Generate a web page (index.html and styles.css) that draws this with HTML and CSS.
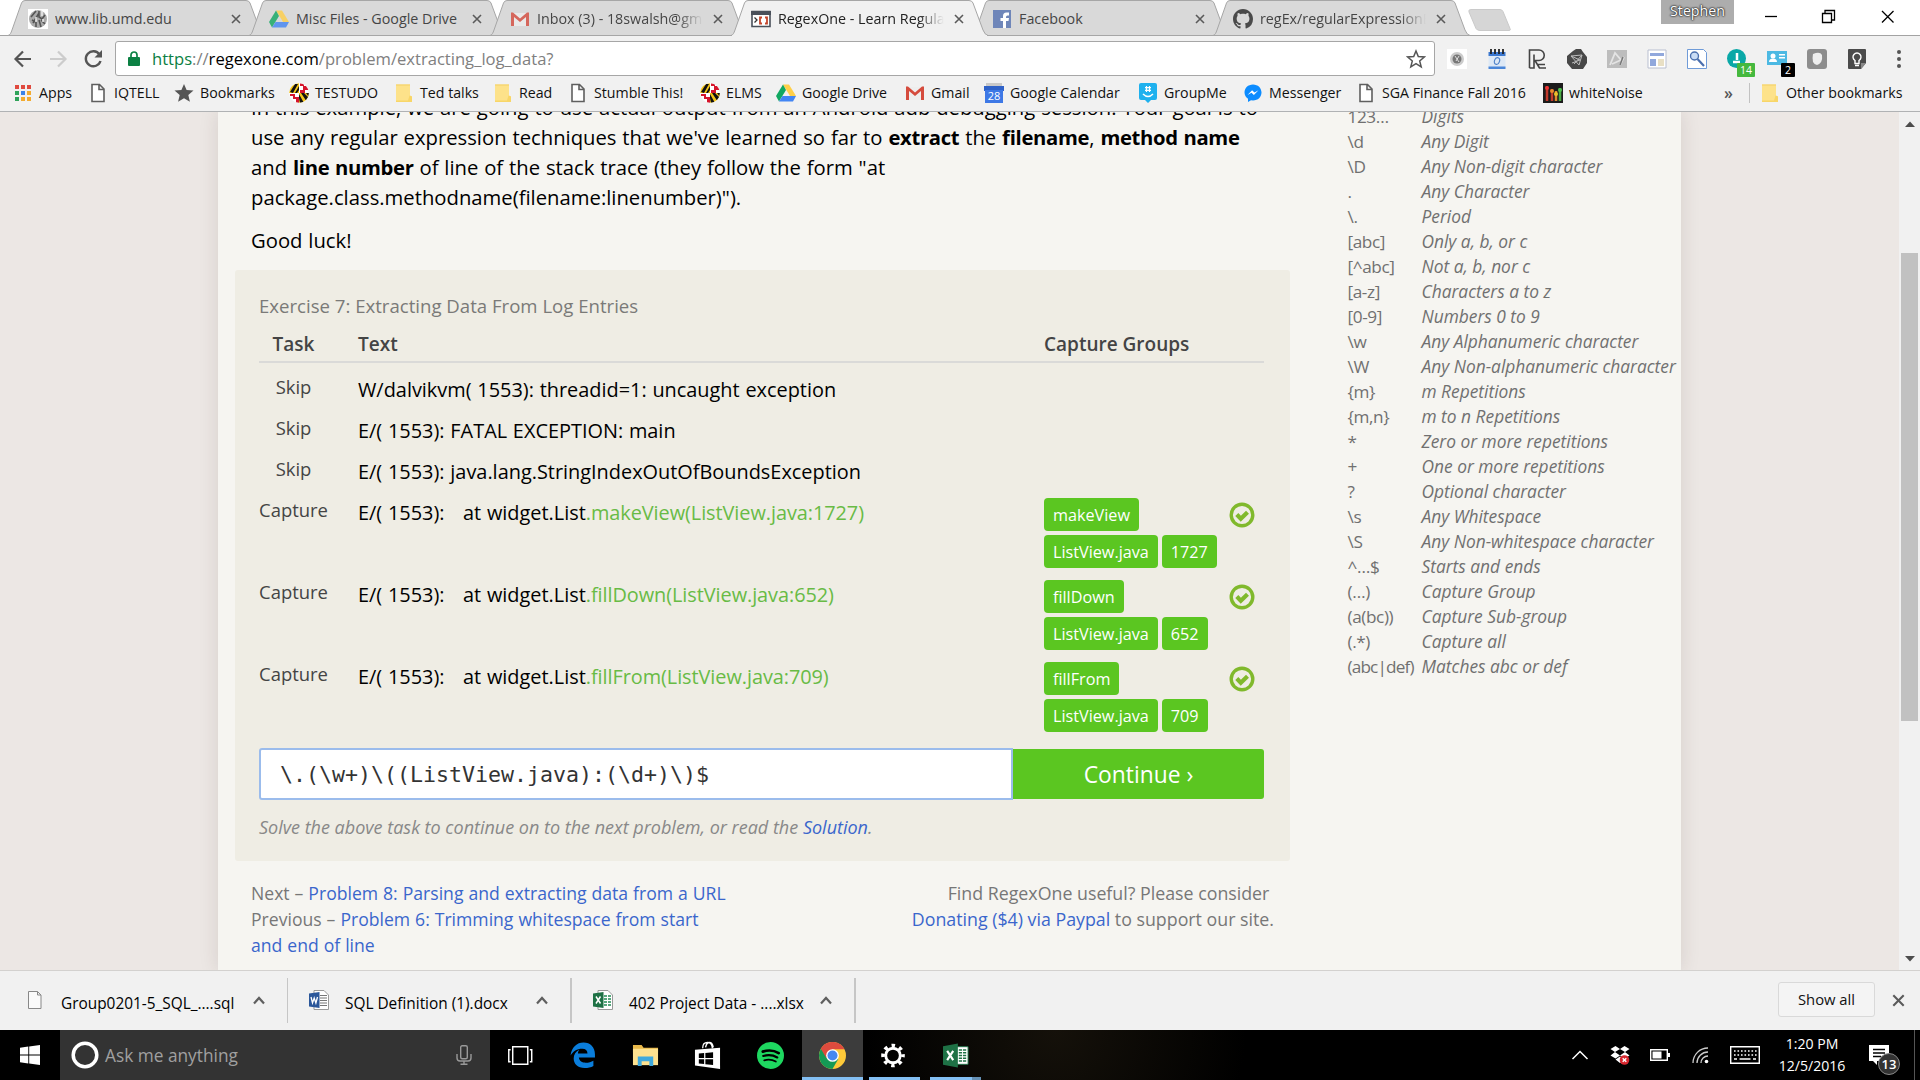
FILE: index.html
```html
<!DOCTYPE html>
<html lang="en">
<head>
<meta charset="utf-8">
<title>RegexOne - Learn Regular Expressions</title>
<link rel="stylesheet" href="styles.css">
</head>
<body>
<svg class="defs" width="0" height="0">
  <symbol id="tab-shape" viewBox="0 0 257 36"><path d="M0 35.5C2 35 3 33 4 30L13.500 3Q14.500 .5 17 .5H238Q241 .5 242 3L252 30Q254 35 257 35.500Z"/></symbol>
  <symbol id="close" viewBox="0 0 10 10"><path d="M1 1l8 8M9 1L1 9" fill="none" stroke="#5a5a5a" stroke-width="1.600"/></symbol>
  <symbol id="doc" viewBox="0 0 20 20"><path d="M4 1.500h7.500l4.500 4.500v12.500H4zM11 2v4.500h4.500" fill="#fff" stroke="#5f5f5f" stroke-width="1.600"/></symbol>
  <symbol id="folder" viewBox="0 0 20 20"><path d="M2 1.500h14v11l2 1v5H2z" fill="#fde28a"/><path d="M2 1.500h14v1H2z" fill="#f3d066"/><path d="M2 17.500h12l1.500-5 2.500 1v5.500H2z" fill="#f8d668"/></symbol>
  <symbol id="umd" viewBox="0 0 20 20"><clipPath id="ball"><circle cx="10" cy="10" r="9.800"/></clipPath><g clip-path="url(#ball)"><path fill="#fff" d="M0 0h20v20H0z"/><path fill="#f5c518" d="M0 0h10v10H0zM10 10h10v10H10z"/><path d="M1 9l5-8h3L4 10zM6 10l4-7v4l-2 3zM0 5l4-4H1zM10 11l5 9h-4l-1-5zM12 10l6 9 2-4-5-5zM17 10h3v4z" fill="#111"/><path d="M11 0h4v3h5v4h-4v3h-5V7h3V3h-3zM1 11h5v3h4v6H7v-4H4v-3H1z" fill="#d5142b"/></g></symbol>
  <symbol id="drive" viewBox="0 0 20 20"><path d="M7 1.500h6l7 11.500h-6z" fill="#ffcf48"/><path d="M7 1.500L0 13l3 5.500L10 7z" fill="#11a861"/><path d="M6.500 13H20l-3 5.500H3z" fill="#4285f4"/></symbol>
  <symbol id="gmail" viewBox="0 0 20 20"><path d="M2 4h16v13H2z" fill="#eee"/><path d="M1 17V3.500h2l7 6 7-6h2V17h-3V8l-6 5-6-5v9z" fill="#d54b3d"/></symbol>
  <symbol id="chev" viewBox="0 0 14 9"><path d="M2 7.500l5-5.500 5 5.500" fill="none" stroke="#5f5f5f" stroke-width="2.200"/></symbol>
  <symbol id="check" viewBox="0 0 26 26"><circle cx="13" cy="13" r="10.800" fill="none" stroke="#80b92c" stroke-width="3.400"/><path d="M7.800 12.500l4 4.200 6.700-6.500" fill="none" stroke="#80b92c" stroke-width="4.200"/></symbol>
</svg>

<header class="chrome">
  <div class="tabstrip">
    <div class="tab"><svg class="shape"><use href="#tab-shape"/></svg>
      <svg class="fav" viewBox="0 0 20 20"><path fill="#fff" d="M0 0h20v20H0z"/><circle cx="10" cy="10" r="9" fill="#aaa"/><path d="M3 8l5-6M5 14l6-10M4 11l4 2v5M11 2v6l3 2 3-4M11 11l2 7M13 11l4 4" stroke="#555" stroke-width="1.600" fill="none"/><path d="M14 2v5M8 8v5M15 10v3" stroke="#eee" stroke-width="1.500"/></svg>
      <span class="tab-title">www.lib.umd.edu</span><svg class="x"><use href="#close"/></svg></div>
    <div class="tab"><svg class="shape"><use href="#tab-shape"/></svg><svg class="fav dim"><use href="#drive"/></svg><span class="tab-title">Misc Files - Google Drive</span><svg class="x"><use href="#close"/></svg></div>
    <div class="tab"><svg class="shape"><use href="#tab-shape"/></svg><svg class="fav dim"><use href="#gmail"/></svg><span class="tab-title fade">Inbox (3) - 18swalsh@gm</span><svg class="x"><use href="#close"/></svg></div>
    <div class="tab active"><svg class="shape"><use href="#tab-shape"/></svg>
      <svg class="fav" viewBox="0 0 20 20"><path d="M1 2.500h18v15H1z" fill="#fff" stroke="#4a505a" stroke-width="1.600"/><path d="M0 2h20v4H0z" fill="#4a505a"/><path d="M3.500 8.500l2.500 2.500-2.500 2.500" fill="none" stroke="#333" stroke-width="1.300"/><path d="M11 8.500H9v6h2M14 8.500h2v6h-2" fill="none" stroke="#c5462c" stroke-width="1.800"/></svg>
      <span class="tab-title fade">RegexOne - Learn Regula</span><svg class="x"><use href="#close"/></svg></div>
    <div class="tab"><svg class="shape"><use href="#tab-shape"/></svg>
      <svg class="fav" viewBox="0 0 20 20"><path fill="#6f86b9" d="M1 1h18v18H1z"/><path d="M11 19v-7H8.500V9H11V7q0-3.500 3.500-3.500H17v3h-1.500q-1.500 0-1.500 1.500V9h3l-.5 3H14v7z" fill="#fff"/></svg>
      <span class="tab-title">Facebook</span><svg class="x"><use href="#close"/></svg></div>
    <div class="tab"><svg class="shape"><use href="#tab-shape"/></svg>
      <svg class="fav" viewBox="0 0 16 16"><path fill="#4a4a4a" d="M8 0C3.580 0 0 3.580 0 8c0 3.540 2.290 6.530 5.470 7.590.4.070.55-.17.55-.38v-1.490c-2.010.37-2.530-.49-2.690-.94-.09-.23-.48-.94-.82-1.130-.28-.15-.68-.52-.01-.53.63-.01 1.080.58 1.230.82.72 1.210 1.870.87 2.330.66.07-.52.28-.87.51-1.070-1.780-.2-3.640-.89-3.640-3.950 0-.87.31-1.590.82-2.150-.08-.2-.36-1.020.08-2.120 0 0 .67-.21 2.200.82.64-.18 1.320-.27 2-.27s1.360.09 2 .27c1.530-1.040 2.200-.82 2.200-.82.44 1.100.16 1.920.08 2.120.51.560.82 1.270.82 2.150 0 3.070-1.870 3.750-3.650 3.950.29.25.54.73.54 1.480v2.200c0 .21.15.46.55.38A8.010 8.010 0 0 0 16 8c0-4.420-3.580-8-8-8z"/></svg>
      <span class="tab-title fade">regEx/regularExpressionE</span><svg class="x"><use href="#close"/></svg></div>
    <svg class="newtab" viewBox="0 0 44 22"><path d="M3 .5h29q2 0 3 2l7 17q1 2-1 2H12q-3 0-4-2L1 3Q0 .5 3 .5z" fill="#d6d6d6" stroke="#cacaca"/></svg>
    <div class="profile">Stephen</div>
    <svg class="winctl" viewBox="0 0 140 35"><g fill="none" stroke="#000" stroke-width="1.300"><path d="M5 16.500h12"/><path d="M62.500 13.500h9v9h-9zM65 13v-2.500h9.500v9.500H72"/><path d="M122 11l11.500 11.500M133.500 11L122 22.500"/></g></svg>
  </div>

  <div class="toolbar">
    <svg class="nav" viewBox="0 0 115 36"><g fill="none" stroke-width="2.200"><path d="M31 18H16M23 10.500L15.500 18l7.500 7.500" stroke="#555"/><path d="M50 18h15M58 10.500l7.500 7.500-7.500 7.500" stroke="#ccc"/><path d="M99.500 13.500A7.500 7.500 0 1 0 100.500 20" stroke="#555" stroke-width="2.400"/></g><path d="M102 9v7.500h-7.500z" fill="#555"/></svg>
    <div class="omnibox">
      <svg class="lock" viewBox="0 0 12 15"><path d="M1 6h10q1 0 1 1v7q0 1-1 1H1q-1 0-1-1V7q0-1 1-1z" fill="#0b8043"/><path d="M3 6.500V4a3 3 0 0 1 6 0v2.500" fill="none" stroke="#0b8043" stroke-width="1.700"/></svg>
      <span class="url"><span class="secure">https</span>://<span class="host">regexone.com</span>/problem/extracting_log_data?</span>
      <svg class="star" viewBox="0 0 20 20"><path d="M10 2l2.300 5.600 6 .4-4.600 3.900 1.500 5.900L10 14.600l-5.200 3.200 1.500-5.900L1.700 8l6-.4z" fill="none" stroke="#555" stroke-width="1.500"/></svg>
    </div>
    <div class="exts">
      <svg viewBox="0 0 20 20"><path fill="#fff" d="M0 0h20v20H0z"/><circle cx="10" cy="10" r="7" fill="#ccc"/><circle cx="10" cy="10" r="4.500" fill="#777"/><path d="M8 7l4 6M12 7l-3 5" stroke="#ddd"/></svg>
      <svg viewBox="0 0 20 20"><path fill="#3c78cf" d="M1.500 3h17v4h-17z"/><path fill="#dde8f5" d="M1.500 7h17v12h-17z"/><path fill="#4a86d8" d="M1.500 17.500h17V20h-17z"/><path d="M4 0v5M8 0v5M12 0v5M16 0v5" stroke="#222" stroke-width="1.800"/><ellipse cx="10" cy="12" rx="2.500" ry="3.500" fill="none" stroke="#4f82c9" stroke-width="1.200" transform="rotate(20 10 12)"/></svg>
      <svg viewBox="0 0 20 20"><path d="M2.500 19V1h9.500a5 5 0 0 1 0 10.500H7V5.500M8 11.500L12.500 19M2.500 19H7V8M11 15.500h7M12 19h7" fill="none" stroke="#444" stroke-width="1.600"/></svg>
      <svg viewBox="0 0 20 20"><path d="M6 2l3-2h5l2 3 4 5v6l-4 6H5l-5-6V7z" fill="#484848"/><path d="M4 7l11-1-3 10-8-9 9 4-8 3M15 6l-8 9" stroke="#bbb" fill="none"/></svg>
      <svg viewBox="0 0 20 20"><path fill="#bdbdbd" d="M0 1h20v18H0z"/><path d="M3 16L8 4l6 7-9 4M13 16l4-8" fill="none" stroke="#e4e4e4" stroke-width="1.800"/><path d="M13 16l3-8" stroke="#777" stroke-width="1.500"/></svg>
      <svg viewBox="0 0 20 20"><path d="M1 1h18v18H1z" fill="#fff" stroke="#b9bfd0"/><path fill="#91a8dc" d="M3 4h14v3H3zM3 10h6v7H3z"/><path fill="#e8dfc4" d="M11 10h6v7h-6z"/></svg>
      <svg viewBox="0 0 20 20"><path d="M.5.500h16l3 3v16H.5z" fill="#fff" stroke="#6f9bd8"/><circle cx="7.500" cy="7" r="4" fill="#c9dcf5" stroke="#4a6fae" stroke-width="1.400"/><path d="M10.500 10l6.500 7" stroke="#4a6fae" stroke-width="2.200"/></svg>
      <svg viewBox="0 0 20 20"><circle cx="9.500" cy="9.500" r="9.500" fill="#0aa8a7"/><path d="M10 4v7M6 13h7" stroke="#fff" stroke-width="2.500"/></svg>
      <svg viewBox="0 0 20 20"><path fill="#4cb9e3" d="M0 2h20v14H0z"/><circle cx="6" cy="7" r="2.500" fill="#fff"/><path fill="#fff" d="M2 13q0-3.500 4-3.500t4 3.500zM12 5h6v1.500h-6zM12 8h6v1.500h-6z"/></svg>
      <svg viewBox="0 0 20 20"><rect width="20" height="20" rx="3" fill="#8d8d8d"/><path d="M6 5q7-3 9 1 1 8-5 10-6-1-4-11z" fill="#eee"/></svg>
      <svg viewBox="0 0 20 20"><path d="M2 0h16q1 0 1 1v13l-5 6H2q-1 0-1-1V1q0-1 1-1z" fill="#4b4b4b"/><path d="M14 20v-6h5z" fill="#888"/><path d="M8 14.500v-3a4 4 0 1 1 4 0v3zM8 16.500h4" fill="none" stroke="#fff" stroke-width="1.400"/></svg>
    </div>
    <svg class="dots" viewBox="0 0 6 20"><circle cx="3" cy="3" r="2"/><circle cx="3" cy="10" r="2"/><circle cx="3" cy="17" r="2"/></svg>
    <span class="badge green">14</span><span class="badge dark">2</span>
  </div>

  <nav class="bookmarks">
    <a><svg viewBox="0 0 20 20"><path fill="#e04a3f" d="M2 2h4v4H2zM8 2h4v4H8zM14 2h4v4h-4z"/><path fill="#2fa35a" d="M2 8h4v4H2zM2 14h4v4H2z"/><path fill="#3b83e8" d="M8 8h4v4H8z"/><path fill="#f3ab2f" d="M14 8h4v4h-4zM8 14h4v4H8zM14 14h4v4h-4z"/></svg>Apps</a>
    <a><svg><use href="#doc"/></svg>IQTELL</a>
    <a><svg viewBox="0 0 20 20"><path d="M10 1l2.600 6 6.900.6-5.200 4.500 1.600 6.700-5.900-3.600-5.900 3.600 1.600-6.700L.5 7.600l6.900-.6z" fill="#555"/></svg>Bookmarks</a>
    <a><svg><use href="#umd"/></svg>TESTUDO</a>
    <a><svg><use href="#folder"/></svg>Ted talks</a>
    <a><svg><use href="#folder"/></svg>Read</a>
    <a><svg><use href="#doc"/></svg>Stumble This!</a>
    <a><svg><use href="#umd"/></svg>ELMS</a>
    <a><svg><use href="#drive"/></svg>Google Drive</a>
    <a><svg><use href="#gmail"/></svg>Gmail</a>
    <a><svg viewBox="0 0 20 20"><path fill="#c9c9c9" d="M2 0h16v4H2z"/><path fill="#2f62c8" d="M0 3h20v5H0z"/><path fill="#3d78e6" d="M1 7h18v13H1z"/><text x="10" y="16.500" class="cal">28</text></svg>Google Calendar</a>
    <a><svg viewBox="0 0 20 20"><path d="M3 0h14q2 0 2 2v13q0 2-2 2h-4l-3 3-3-3H3q-2 0-2-2V2q0-2 2-2z" fill="#1fb1ee"/><path d="M8.500 3v6M11.500 3v6M7 4.700h6M7 7.300h6" stroke="#fff" stroke-width="1.200"/><path d="M5 11q5 5 10 0" fill="none" stroke="#fff" stroke-width="1.500"/></svg>GroupMe</a>
    <a><svg viewBox="0 0 20 20"><path d="M10 1.500c5 0 8.500 3.600 8.500 8s-3.500 8-8.500 8l-2-.3L5 19v-3.200C2.800 14.300 1.500 12 1.500 9.500c0-4.400 3.500-8 8.500-8z" fill="#0c8cff"/><path d="M4.500 12l4.600-4.800 2.400 2.300 4-2.300-4.600 4.800-2.400-2.300z" fill="#fff"/></svg>Messenger</a>
    <a><svg><use href="#doc"/></svg>SGA Finance Fall 2016</a>
    <a><svg viewBox="0 0 20 20"><path fill="#1b1b1b" d="M0 0h20v20H0z"/><path d="M4 3v15M9 6v12" stroke="#c0392b" stroke-width="2.500"/><path d="M13 8v10" stroke="#e08a2e" stroke-width="2.500"/><path d="M17 5v13" stroke="#49a942" stroke-width="2.500"/><circle cx="4" cy="5" r="2" fill="#e33"/><circle cx="9" cy="8" r="2" fill="#e98a2b"/><circle cx="13" cy="11" r="2" fill="#e9c12b"/><circle cx="17" cy="7" r="2" fill="#4fc14f"/></svg>whiteNoise</a>
    <span class="more">»</span>
    <a class="other"><svg><use href="#folder"/></svg>Other bookmarks</a>
  </nav>
</header>

<main class="viewport">
  <div class="page">
    <section class="lesson">
      <p>In this example, we are going to use actual output from an Android adb debugging session. Your goal is to<br>use any regular expression techniques that we've learned so far to <b>extract</b> the <b>filename</b>, <b>method name</b><br>and <b>line number</b> of line of the stack trace (they follow the form "at<br>package.class.methodname(filename:linenumber)").</p>
      <p>Good luck!</p>
      <div class="exercise">
        <h2>Exercise 7: Extracting Data From Log Entries</h2>
        <div class="row head"><span class="task">Task</span><span>Text</span><span>Capture Groups</span></div>
        <div class="rows">
          <div class="row"><span class="task">Skip</span><span class="log">W/dalvikvm( 1553): threadid=1: uncaught exception</span></div>
          <div class="row"><span class="task">Skip</span><span class="log">E/( 1553): FATAL EXCEPTION: main</span></div>
          <div class="row"><span class="task">Skip</span><span class="log">E/( 1553): java.lang.StringIndexOutOfBoundsException</span></div>
          <div class="row cap"><span class="task">Capture</span><span class="log"><span class="pre">E/( 1553):</span>at widget.List<em>.makeView(ListView.java:1727)</em></span><span class="groups"><i>makeView</i><i>ListView.java</i><i>1727</i></span><svg class="ok"><use href="#check"/></svg></div>
          <div class="row cap"><span class="task">Capture</span><span class="log"><span class="pre">E/( 1553):</span>at widget.List<em>.fillDown(ListView.java:652)</em></span><span class="groups"><i>fillDown</i><i>ListView.java</i><i>652</i></span><svg class="ok"><use href="#check"/></svg></div>
          <div class="row cap"><span class="task">Capture</span><span class="log"><span class="pre">E/( 1553):</span>at widget.List<em>.fillFrom(ListView.java:709)</em></span><span class="groups"><i>fillFrom</i><i>ListView.java</i><i>709</i></span><svg class="ok"><use href="#check"/></svg></div>
        </div>
        <div class="answer"><div class="input">\.(\w+)\((ListView.java):(\d+)\)$</div><div class="continue">Continue ›</div></div>
        <p class="hint">Solve the above task to continue on to the next problem, or read the <a>Solution</a>.</p>
      </div>
      <div class="footer">
        <div class="links">Next – <a>Problem 8: Parsing and extracting data from a URL</a><br>Previous – <a>Problem 6: Trimming whitespace from start<br>and end of line</a></div>
        <div class="donate">Find RegexOne useful? Please consider&nbsp;<br><a>Donating ($4) via Paypal</a> to support our site.</div>
      </div>
    </section>
    <aside class="cheats">
      <code>123…</code><i>Digits</i>
      <code>\d</code><i>Any Digit</i>
      <code>\D</code><i>Any Non-digit character</i>
      <code>.</code><i>Any Character</i>
      <code>\.</code><i>Period</i>
      <code>[abc]</code><i>Only a, b, or c</i>
      <code>[^abc]</code><i>Not a, b, nor c</i>
      <code>[a-z]</code><i>Characters a to z</i>
      <code>[0-9]</code><i>Numbers 0 to 9</i>
      <code>\w</code><i>Any Alphanumeric character</i>
      <code>\W</code><i>Any Non-alphanumeric character</i>
      <code>{m}</code><i>m Repetitions</i>
      <code>{m,n}</code><i>m to n Repetitions</i>
      <code>*</code><i>Zero or more repetitions</i>
      <code>+</code><i>One or more repetitions</i>
      <code>?</code><i>Optional character</i>
      <code>\s</code><i>Any Whitespace</i>
      <code>\S</code><i>Any Non-whitespace character</i>
      <code>^…$</code><i>Starts and ends</i>
      <code>(…)</code><i>Capture Group</i>
      <code>(a(bc))</code><i>Capture Sub-group</i>
      <code>(.*)</code><i>Capture all</i>
      <code class="tight">(abc|def)</code><i>Matches abc or def</i>
    </aside>
  </div>
  <div class="scrollbar">
    <svg viewBox="0 0 10 6"><path d="M0 6l5-5.500L10 6z"/></svg>
    <div class="thumb"></div>
    <svg viewBox="0 0 10 6"><path d="M0 0l5 5.500L10 0z"/></svg>
  </div>
</main>

<div class="downloads">
  <div class="dl"><svg class="file" viewBox="0 0 20 20"><path d="M3.500 1.500h9l3.500 3.500v13.500H3.500zM12.500 1.500V5H16" fill="#fafafa" stroke="#888"/></svg><span>Group0201-5_SQL_....sql</span><svg class="up"><use href="#chev"/></svg></div>
  <div class="dl"><svg class="file" viewBox="0 0 20 20"><path d="M5 .5h10l4.500 4.500v14.500H5z" fill="#fff" stroke="#999"/><path d="M11 5.500h7M11 8h7M11 10.500h7M11 13h7M11 15.500h7" stroke="#777"/><path d="M0 3.500L10.500 2v16L0 16.500z" fill="#2b579a"/><path d="M2 7l1.500 6 1.700-5 1.700 5L8.500 7" stroke="#fff" stroke-width="1.300" fill="none"/></svg><span>SQL Definition (1).docx</span><svg class="up"><use href="#chev"/></svg></div>
  <div class="dl"><svg class="file" viewBox="0 0 20 20"><path d="M5 .5h10l4.500 4.500v14.500H5z" fill="#fff" stroke="#999"/><path d="M11 6h7M11 9h7M11 12h7M11 15h7" stroke="#57a77d" stroke-width="2"/><path d="M14.500 5v11" stroke="#fff"/><path d="M0 3.500L10.500 2v16L0 16.500z" fill="#1e7145"/><path d="M3 6.500l4.500 7M7.500 6.500l-4.500 7" stroke="#fff" stroke-width="1.500"/></svg><span>402 Project Data - ....xlsx</span><svg class="up"><use href="#chev"/></svg></div>
  <div class="showall">Show all</div>
  <svg class="dlx"><use href="#close"/></svg>
</div>

<footer class="taskbar">
  <svg class="start" viewBox="0 0 20 20"><path fill="#fff" d="M0 2.800l8.300-1.200v7.900H0zM9.200 1.400L20 0v9.500H9.200zM0 10.400h8.300v8L0 17.200zM9.200 10.400H20V20L9.200 18.500z"/></svg>
  <div class="search"><svg class="cortana" viewBox="0 0 28 28"><circle cx="14" cy="14" r="11.800" fill="none" stroke="#fff" stroke-width="3.500"/></svg><span>Ask me anything</span><svg class="mic" viewBox="0 0 16 20"><g fill="none" stroke="#999" stroke-width="1.400"><rect x="4.700" y=".7" width="6.600" height="13" rx="1.500"/><path d="M1 9v4q0 3 3 3h8q3 0 3-3V9M8 16v3M4.500 19.300h7"/></g></svg></div>
  <div class="apps">
    <div class="app"><svg viewBox="0 0 26 26"><g fill="none" stroke="#fff" stroke-width="1.400"><path d="M5.500 4.500h14.500v17H5.500zM3.500 7.500H1.700V19h1.800M22 7.500h1.800V19H22"/></g></svg></div>
    <div class="app"><svg viewBox="0 0 26 26"><path d="M1.500 13C2.500 5 7.500 .5 14 .5 20.500 .5 25 5 25 12v3H9.500c.3 3.500 3.300 5 6.500 5 3 0 5.500-.8 7.500-2v5c-2.300 1.300-5.200 2-8.500 2C8.500 25 4.500 21.500 4.500 16c0-4 2-7 5.500-8.600-1 1.100-1.300 2.400-1.400 3.600h9.200c0-3-1.800-4.600-5-4.600C7.500 6.400 4 9 1.500 13z" fill="#0a7ddb"/></svg></div>
    <div class="app"><svg viewBox="0 0 28 26"><path fill="#e8b84a" d="M1 2h9l2 3h15v5H1z"/><path fill="#fde18f" d="M1 6h26v17H1z"/><path fill="#3fa9dd" d="M6 14h16v10h-4v-5h-8v5H6z"/></svg></div>
    <div class="app"><svg class="store" viewBox="0 0 28 30"><path d="M9 8q0-6 5-6t5 6M12 7q1-5 4-5t4 5" fill="none" stroke="#fff" stroke-width="1.400"/><path fill="#fff" d="M1 9.500l26-2v22L1 26z"/><path d="M5 13.500l5.500-.5v5H5zM11.800 12.900l8-.7v5.800h-8zM5 19.300h5.500v5L5 23.800zM11.800 19.300h8v6l-8-.8z" fill="#000"/></svg></div>
    <div class="app"><svg viewBox="0 0 28 28"><circle cx="14" cy="14" r="14" fill="#1ed760"/><g fill="none" stroke="#000" stroke-linecap="round"><path d="M6 10q9-3 16.500 1.500" stroke-width="2.800"/><path d="M6.500 14.500q8-2.300 14.500 1.500" stroke-width="2.300"/><path d="M7.500 19q6.500-1.800 12 1.300" stroke-width="1.900"/></g></svg></div>
    <div class="app current"><svg viewBox="0 0 28 28"><circle cx="14" cy="14" r="14" fill="#fdc939"/><path d="M14 14L1.900 7A14 14 0 0 0 14 28l6-10.500z" fill="#149a55"/><path d="M14 14V7.500h12.500A14 14 0 0 0 1.900 7l5.700 9.500z" fill="#dd4b3e"/><circle cx="14" cy="14" r="6.600" fill="#fff"/><circle cx="14" cy="14" r="5.200" fill="#4688f1"/></svg></div>
    <div class="app open gear"><svg viewBox="0 0 24 24"><circle cx="12" cy="12" r="6.700" fill="none" stroke="#fff" stroke-width="2.600"/><circle cx="12" cy="12" r="9.200" fill="none" stroke="#fff" stroke-width="3.400" stroke-dasharray="3.200 4.025" stroke-dashoffset="1.600"/></svg></div>
    <div class="app open multi"><svg viewBox="0 0 28 26"><path fill="#fff" stroke="#1e7145" d="M14 3.500h13v19H14z"/><path d="M17 7h8M17 10h8M17 13h8M17 16h8M17 19h8" stroke="#1e7145" stroke-width="1.600"/><path d="M21 5v16" stroke="#fff"/><path fill="#1e7145" d="M0 3L16 0v26L0 23z"/><path d="M4.500 8l6.500 10M11 8L4.500 18" stroke="#fff" stroke-width="2.300"/></svg></div>
  </div>
  <div class="tray">
    <svg class="t-up" viewBox="0 0 18 10"><path d="M1.500 9L9 1.500 16.500 9" fill="none" stroke="#fff" stroke-width="1.500"/></svg>
    <svg class="t-box" viewBox="0 0 20 20"><path fill="#fff" d="M5.500 1L10 4 5 7 .5 4zM14.500 1L10 4l5 3 4.500-3zM.5 10.500L5 7l5 3.500-4.500 3zM19.500 10.500L15 7l-5 3.500 4.500 3zM5.500 14.500L10 11.500l4.500 3L10 18z"/><circle cx="14.500" cy="15" r="4.800" fill="#d8272f"/><path d="M12.700 13.200l3.600 3.600M16.300 13.200l-3.600 3.600" stroke="#fff" stroke-width="1.400"/></svg>
    <svg class="t-bat" viewBox="0 0 20 12"><path d="M.7.700h16.600v10.600H.7z" fill="none" stroke="#fff" stroke-width="1.400"/><path fill="#fff" d="M2.500 2.500h9v7h-9zM18 4h2v4h-2z"/></svg>
    <svg class="t-wifi" viewBox="0 0 17 17"><g fill="none" stroke="#ccc" stroke-width="1.300"><path d="M1 16A15 15 0 0 1 16 1M5 16A11 11 0 0 1 16 5M9 16a7 7 0 0 1 7-7"/></g><circle cx="14.500" cy="14.500" r="1.800" fill="#fff"/></svg>
    <svg class="t-key" viewBox="0 0 30 18"><path d="M.7.700h28.600v16.600H.7z" fill="none" stroke="#fff" stroke-width="1.400"/><path d="M4 5h23M4 9h23" stroke="#fff" stroke-width="1.500" stroke-dasharray="1.600 1.900"/><path d="M4 13h3M9.500 13h11M23 13h3" stroke="#fff" stroke-width="1.500"/></svg>
    <div class="clock">1:20 PM<br>12/5/2016</div>
    <div class="notif"><svg viewBox="0 0 20 20"><path fill="#fff" d="M0 0h20v16H8v4l-4-4H0z"/><path d="M4 4.500h12M4 8h12M4 11.500h8" stroke="#000" stroke-width="1.300"/></svg><span>13</span></div>
  </div>
</footer>
</body>
</html>
```
FILE: styles.css
```css
* { box-sizing: border-box; }
body { margin: 0; width: 1920px; height: 1080px; overflow: hidden; display: flex; flex-direction: column; font-family: "Open Sans", "Noto Sans", sans-serif; color: #000; background: #fff; white-space: nowrap; }
p, h2 { margin: 0; }
svg { flex: none; display: block; }
.defs { position: absolute; }
a { color: #3a66cc; }

/* browser chrome */
.chrome { height: 112px; flex: none; background: #f1f1f1; border-bottom: 1px solid #b0b2b4; }
.tabstrip { height: 36px; display: flex; padding-left: 8px; background: linear-gradient(#a3a3a3, #a3a3a3) bottom / 100% 1px no-repeat #fff; }
.tab { position: relative; width: 257px; height: 36px; margin-right: -16px; padding: 1px 24px 0 20px; display: flex; align-items: center; flex: none; font-size: 14.300px; color: #454545; }
.tab.active { z-index: 2; color: #222; }
.shape { position: absolute; inset: 0; width: 257px; height: 36px; fill: #d9d9d9; stroke: #a6a6a6; }
.active .shape { fill: #f1f1f1; }
.active::after { content: ""; position: absolute; left: 1px; right: 1px; bottom: 0; height: 1px; background: #f1f1f1; }
.fav { position: relative; width: 20px; height: 20px; margin-right: 7px; }
.dim { opacity: .8; }
.tab-title { position: relative; width: 172px; overflow: hidden; line-height: 26px; margin-right: 5px; }
.fade { -webkit-mask-image: linear-gradient(90deg, #000 82%, transparent 97%); mask-image: linear-gradient(90deg, #000 82%, transparent 97%); }
.x { position: relative; width: 10px; height: 10px; }
.newtab { width: 44px; height: 22px; margin: 9px 0 0 14px; }
.profile { width: 73px; height: 24px; margin-left: 149px; background: #adadad; color: #fff; font-size: 14.2px; line-height: 22px; text-align: center; text-shadow: 0 0 2px #222, 0 0 2px #222, 0 0 1px #222; }
.winctl { width: 140px; height: 35px; margin-left: 26px; }

.toolbar { position: relative; height: 40px; padding-top: 5px; display: flex; align-items: center; }
.nav { width: 115px; height: 36px; }
.omnibox { width: 1320px; height: 35px; background: #fff; border: 1px solid #a6a6a6; border-radius: 3px; display: flex; align-items: center; padding: 0 8px 0 12px; }
.lock { width: 12px; height: 15px; }
.url { flex: 1; margin-left: 12px; font-size: 16.600px; line-height: 30px; color: #808080; }
.secure { color: #0b8043; }
.host { color: #000; }
.star { width: 20px; height: 20px; }
.exts { display: flex; gap: 20px; margin-left: 12px; }
.exts svg { width: 20px; height: 20px; }
.dots { width: 6px; height: 20px; margin-left: 29px; fill: #555; }
.badge { position: absolute; top: 27px; height: 14px; font-size: 10.500px; line-height: 14px; color: #fff; text-align: center; border-radius: 1px; }
.badge.green { left: 1737px; width: 18px; background: #45b83e; }
.badge.dark { left: 1781px; width: 14px; background: #000; }

.bookmarks { height: 33px; padding-left: 13px; display: grid; grid-template-columns: 75px 86px 115px 105px 99px 75px 132px 76px 129px 79px 154px 105px 113px 187px 181px 25px 1fr; align-items: center; font-size: 14.200px; }
.bookmarks a { display: flex; align-items: center; gap: 6px; color: #111; line-height: 24px; }
.bookmarks svg { width: 20px; height: 20px; }
.more { color: #555; font-weight: 600; font-size: 16px; line-height: 20px; }
.bookmarks .other { border-left: 1px solid #c2c2c2; height: 20px; padding-left: 10px; }
.cal { font-size: 11px; fill: #fff; text-anchor: middle; }

/* page */
.viewport { height: 858px; flex: none; display: flex; background: #ece7e4; overflow: hidden; }
.page { width: 1463px; margin: 0 218px; background: #f6f5f1; box-shadow: 0 0 18px rgba(60, 40, 30, .13); display: flex; flex: none; }
.lesson { width: 1072px; margin: -20px 0 0 17px; }
.lesson > p { padding-left: 16px; margin-bottom: 13px; font-size: 20.250px; line-height: 30px; word-spacing: .6px; }
.lesson b { letter-spacing: -.3px; }
.exercise { width: 1055px; height: 591px; margin-top: 15px; padding: 21px 26px 0 24px; background: #efede4; border-radius: 3px; }
.exercise h2 { font-size: 18.600px; font-weight: 400; line-height: 30px; color: #7a7a78; margin-bottom: 7px; }
.row { display: grid; grid-template-columns: 69px 686px 180px 1fr; height: 41px; line-height: 30px; }
.task { text-align: center; font-size: 18.450px; color: #444; }
.row > :nth-child(2) { padding-left: 30px; }
.head { height: 35px; border-bottom: 2px solid #dadad8; font-size: 19px; line-height: 32px; font-weight: 600; color: #444; }
.head > :nth-child(3) { padding-left: 30px; }
.head .task { font-size: 19px; }
.rows { padding-top: 9px; }
.log { font-size: 19.900px; padding-top: 3px; word-spacing: .6px; }
.log em { font-style: normal; letter-spacing: -.06px; color: #68bb45; }
.pre { display: inline-block; width: 105px; }
.cap { height: 82px; }
.groups { width: 185px; margin-left: 30px; padding-top: 3px; display: flex; flex-wrap: wrap; gap: 4px; align-content: flex-start; }
.groups i { height: 33px; padding: 0 9px; border-radius: 4px; background: #5bc621; color: #fff; font-style: normal; font-size: 16.200px; line-height: 34px; }
.groups i:first-child { margin-right: 60px; }
.ok { width: 26px; height: 26px; margin: 6.500px 0 0 34.500px; }
.answer { display: flex; margin-top: 7px; height: 52px; align-items: center; }
.input { width: 754px; height: 52px; padding-left: 19px; background: #fff; border: 2px solid #9bbcec; border-radius: 3px 0 0 3px; font-family: "DejaVu Sans Mono", monospace; font-size: 21.600px; line-height: 50px; color: #333; }
.continue { flex: 1; height: 50px; background: #5bc621; color: #fff; border-radius: 0 3px 3px 0; text-align: center; font-size: 22.800px; line-height: 51px; }
.hint { margin-top: 12px; font-size: 18px; line-height: 30px; font-style: italic; color: #888; }
.footer { display: flex; justify-content: space-between; padding: 19px 33px 0 16px; font-size: 17.600px; line-height: 26px; color: #777; }
.links { word-spacing: .4px; }
.donate { text-align: right; font-size: 17.800px; }
.cheats { margin: -8px 0 0 40.500px; display: grid; grid-template-columns: 74px 1fr; grid-auto-rows: 25px; line-height: 25px; font-size: 17.350px; color: #707070; align-content: start; }
.cheats code { font: inherit; font-size: 17.200px; line-height: 25px; letter-spacing: -.4px; }
.cheats .tight { letter-spacing: -.85px; }
.scrollbar { width: 21px; flex: none; background: #f1f1f1; display: flex; flex-direction: column; align-items: center; }
.scrollbar svg { width: 10px; height: 6px; margin-top: 9px; fill: #4d4d4d; }
.thumb { width: 17px; height: 468px; margin: 126px 0 226px; background: #c1c1c1; }

/* downloads shelf */
.downloads { height: 60px; flex: none; background: #f1f1f1; border-top: 1px solid #d3d1cf; display: flex; align-items: center; }
.dl { width: 284px; height: 45px; margin-top: -1px; padding-left: 21px; border-right: 2px solid #c6c6c6; display: flex; align-items: center; font-size: 15.400px; }
.dl:first-child { width: 288px; padding-left: 25px; border-right-width: 1px; }
.file { width: 20px; height: 20px; margin-top: -1px; margin-right: 16px; }
.dl span { flex: 1; padding-top: 8px; line-height: 24px; }
.up { width: 14px; height: 9px; margin-right: 21px; }
.showall { width: 97px; height: 35px; margin: -2px 0 0 auto; border: 1px solid #d9d9d9; border-radius: 3px; font-size: 14.800px; line-height: 32px; text-align: center; color: #111; background: #f4f4f4; }
.dlx { width: 13px; height: 13px; margin: 0 15px 0 17px; }

/* taskbar */
.taskbar { height: 50px; flex: none; background: radial-gradient(circle at 55% 0, #15110a, #000 18%); display: flex; align-items: center; }
.start { width: 20px; height: 20px; margin: 0 20px; }
.search { width: 430px; height: 50px; background: #333; display: flex; align-items: center; padding: 0 18px 0 11px; color: #a0a0a0; font-size: 17.300px; }
.cortana { width: 28px; height: 28px; }
.search span { flex: 1; padding: 2px 0 0 6px; line-height: 30px; }
.mic { width: 16px; height: 20px; }
.apps { display: flex; height: 50px; }
.app { width: 61px; height: 50px; margin-right: 1.400px; display: flex; align-items: center; justify-content: center; }
.app svg { width: 27px; height: 27px; }
.app .store { height: 30px; }
.current { background: #3c3c3c; border-bottom: 3px solid #83bff3; padding-top: 3px; }
.open { width: 51px; margin: 0 5px; border-bottom: 3px solid #83bff3; padding-top: 3px; }
.open svg { width: 26px; }
.gear { padding-right: 3px; }
.multi { border-image: linear-gradient(90deg, #83bff3 78%, #6590b5 78%) 3; }
.tray { margin-left: auto; display: flex; align-items: center; height: 50px; }
.t-up { width: 18px; height: 10px; margin-right: 21px; }
.t-box { width: 20px; height: 20px; margin-right: 20px; }
.t-bat { width: 20px; height: 12px; margin-right: 22px; }
.t-wifi { width: 17px; height: 17px; margin-right: 21px; }
.t-key { width: 30px; height: 18px; margin-right: 17px; }
.clock { width: 70px; color: #fff; font-size: 14.100px; line-height: 22.500px; text-align: center; }
.notif { position: relative; width: 51px; height: 50px; margin-left: 22px; padding-top: 15px; }
.notif svg { width: 20px; height: 20px; }
.notif span { position: absolute; left: 9px; top: 23px; width: 22px; height: 22px; border-radius: 50%; background: #333; border: 1px solid #888; color: #fff; font-size: 13px; font-weight: 600; line-height: 20px; text-align: center; }
.notif { background: linear-gradient(#555, #555) 45px 0 / 1px 100% no-repeat; }
```
